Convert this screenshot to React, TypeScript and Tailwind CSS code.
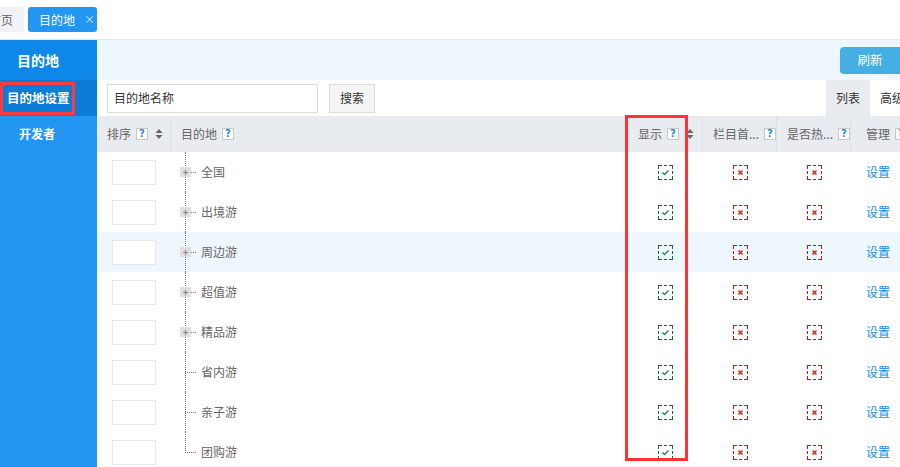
import { Fragment } from "react"

const font = { fontFamily: '"Noto Sans CJK SC", "Liberation Sans", sans-serif' }

const rows = [
    { name: "全国", plus: true },
    { name: "出境游", plus: true },
    { name: "周边游", plus: true, hover: true },
    { name: "超值游", plus: true },
    { name: "精品游", plus: true },
    { name: "省内游", plus: false },
    { name: "亲子游", plus: false },
    { name: "团购游", plus: false, last: true },
]

const Help = () => (
    <span className="inline-flex items-center justify-center w-[12px] h-[12px] border border-[#c8c8c8] bg-white text-[10px] font-bold leading-none text-[#1a8be0] ml-[5px]" style={{ fontFamily: '"DejaVu Sans", sans-serif' }}>
        ?
    </span>
)

const SortIcon = () => (
    <svg width="8" height="12" viewBox="0 0 8 12" className="ml-[7px]">
        <path d="M4 1 L7.5 5 L0.5 5 Z" fill="#666" />
        <path d="M4 11 L7.5 7 L0.5 7 Z" fill="#666" />
    </svg>
)

// dashed square: corner dashes + one middle dash per side
const dashes =
    "M0 0.5H4M6 0.5H9M11 0.5H15" +
    "M0 14.5H4M6 14.5H9M11 14.5H15" +
    "M0.5 0V4M0.5 6V9M0.5 11V15" +
    "M14.5 0V4M14.5 6V9M14.5 11V15"

const DashBox = ({ color, children }: { color: string; children: React.ReactNode }) => (
    <svg width="15" height="15" viewBox="0 0 15 15">
        <path d={dashes} fill="none" stroke={color} strokeWidth="1" />
        {children}
    </svg>
)

const CheckOn = () => (
    <DashBox color="#0a7432">
        <path d="M4.5 7.5 L6.5 9.5 L10.5 5.5" fill="none" stroke="#2d8a4f" strokeWidth="1.5" />
    </DashBox>
)

const CheckOff = () => (
    <DashBox color="#ff0000">
        <path d="M5.5 5.5 L9.5 9.5 M9.5 5.5 L5.5 9.5" stroke="#ff1010" strokeWidth="1.5" />
    </DashBox>
)

const App = () => {
    return (
        <div className="w-[900px] h-[467px] overflow-hidden bg-white flex flex-col text-[12px] text-[#666]" style={font}>
            {/* tab bar */}
            <div className="h-10 shrink-0 border-b border-[#e3e8ee] flex items-center gap-[4px] overflow-hidden">
                <div className="ml-[-22px] h-[25px] px-[11px] flex items-center bg-[#f0f2f5] rounded-[3px] text-[#666] whitespace-nowrap">首页</div>
                <div className="h-[25px] w-[69px] pl-[11px] flex items-center bg-[#2196f3] rounded-[3px] text-white">
                    目的地
                    <span className="ml-[9px] text-[11px] leading-none text-[#d8ecff]">×</span>
                </div>
            </div>

            <div className="flex flex-1 min-h-0">
                {/* sidebar */}
                <div className="w-[97px] shrink-0 bg-[#2196f3] flex flex-col text-white">
                    <div className="h-10 bg-[#0e88e8] flex items-center pl-[17px] text-[14px] font-bold">目的地</div>
                    <div className="h-9 bg-[#0b7dd9] flex items-center">
                        <div className="h-[33px] w-[75px] border-[3px] border-[#ff3b3b] flex items-center pl-[4px] text-[12.5px] font-bold">
                            目的地设置
                        </div>
                    </div>
                    <div className="h-9 flex items-center pl-[19px] font-bold">开发者</div>
                </div>

                {/* main */}
                <div className="flex-1 min-w-0 flex flex-col relative overflow-hidden">
                    <div className="h-10 shrink-0 bg-[#eef6fe] flex items-center justify-end">
                        <button className="h-[27px] w-[60px] bg-[#45afe3] text-white rounded-l-[4px] text-[12.5px]">刷新</button>
                    </div>

                    <div className="h-9 shrink-0 flex items-center">
                        <div className="ml-[10px] w-[211px] h-[29px] border border-[#dcdcdc] flex items-center pl-[6px] text-[#333]">目的地名称</div>
                        <button className="ml-[11px] w-[46px] h-[29px] border border-[#dcdcdc] bg-[#f5f5f5] text-[#333]">搜索</button>
                        <div className="ml-auto mr-[-30px] h-full flex shrink-0">
                            <div className="w-[44px] bg-[#e8ebf0] flex items-center justify-center text-[#333]">列表</div>
                            <div className="w-[60px] flex items-center pl-[10px] text-[#333] whitespace-nowrap">高级</div>
                        </div>
                    </div>

                    {/* table */}
                    <div className="grid grid-cols-[74px_457px_75px_74px_74px_60px]">
                        <div className="h-9 bg-[#e8ebf0] flex items-center pl-[10px] border-r border-[#dde1e6]">
                            排序<Help /><SortIcon />
                        </div>
                        <div className="h-9 bg-[#e8ebf0] flex items-center pl-[10px]">
                            目的地<Help />
                        </div>
                        <div className="h-9 bg-[#e8ebf0] flex items-center pl-[10px] border-r border-[#dde1e6]">
                            显示<Help /><SortIcon />
                        </div>
                        <div className="h-9 bg-[#e8ebf0] flex items-center pl-[10px] border-r border-[#dde1e6] whitespace-nowrap">
                            栏目首...<Help />
                        </div>
                        <div className="h-9 bg-[#e8ebf0] flex items-center pl-[10px] border-r border-[#dde1e6] whitespace-nowrap">
                            是否热...<Help />
                        </div>
                        <div className="h-9 bg-[#e8ebf0] flex items-center pl-[15px] whitespace-nowrap">
                            管理<Help />
                        </div>

                        {rows.map((r) => {
                            const bg = r.hover ? "bg-[#eef6fe]" : "bg-white"
                            return (
                                <Fragment key={r.name}>
                                    <div className={`h-10 ${bg} flex items-center justify-center`}>
                                        <div className="w-[44px] h-[25px] border border-[#e8e8e8] bg-white" />
                                    </div>
                                    <div className={`h-10 ${bg} flex items-center pl-[9px] relative`}>
                                        <span
                                            className={`absolute left-[14px] top-0 border-l border-dotted border-[#777] ${r.last ? "h-[21px]" : "h-10"}`}
                                        />
                                        <span className="relative w-[11px] h-[10px] flex items-center justify-center">
                                            {r.plus && (
                                                <span className="w-[11px] h-[10px] bg-[#e0e0e0] flex items-center justify-center text-[#777] text-[11px] leading-none">
                                                    +
                                                </span>
                                            )}
                                        </span>
                                        <span className={`w-[5px] border-t border-dotted border-[#777] ${r.plus ? "" : "ml-[-6px] w-[11px]"}`} />
                                        <span className="ml-[5px]">{r.name}</span>
                                    </div>
                                    <div className={`h-10 ${bg} flex items-center justify-center`}>
                                        <CheckOn />
                                    </div>
                                    <div className={`h-10 ${bg} flex items-center justify-center`}>
                                        <CheckOff />
                                    </div>
                                    <div className={`h-10 ${bg} flex items-center justify-center`}>
                                        <CheckOff />
                                    </div>
                                    <div className={`h-10 ${bg} flex items-center pl-[15px] text-[#1a8be0]`}>设置</div>
                                </Fragment>
                            )
                        })}
                    </div>

                    {/* red highlight around 显示 column */}
                    <div className="absolute left-[528px] top-[75px] w-[63px] h-[346px] border-[3px] border-[#ff3333] pointer-events-none" />
                </div>
            </div>
        </div>
    )
}

export default App
